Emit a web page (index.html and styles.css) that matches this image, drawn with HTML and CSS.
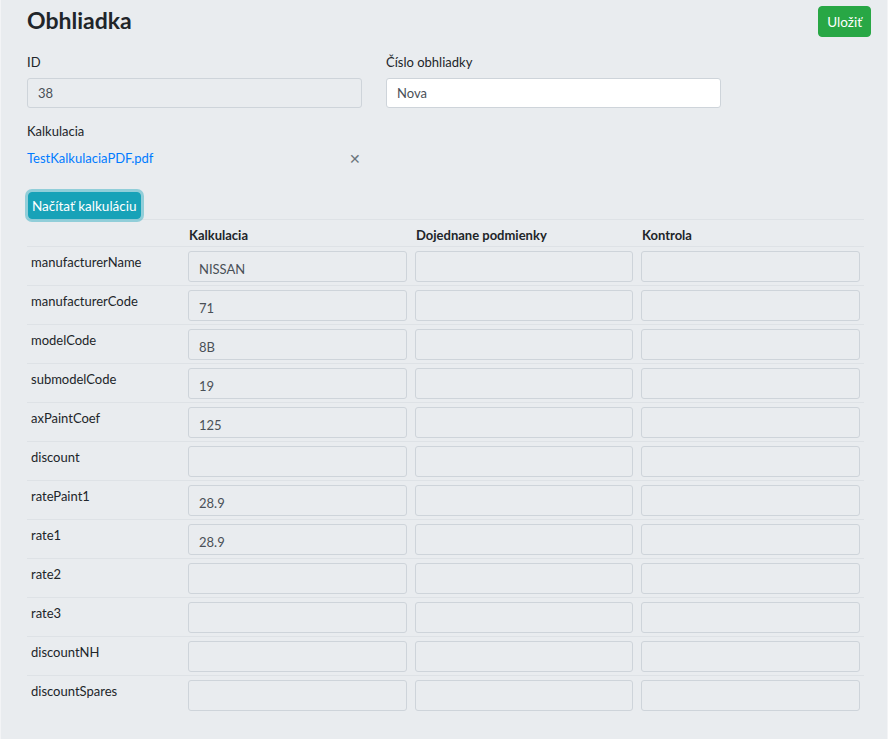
FILE: index.html
```html
<!DOCTYPE html>
<html lang="sk">
<head>
<meta charset="utf-8">
<title>Obhliadka</title>
<link rel="stylesheet" href="styles.css">
</head>
<body>
<div class="page">
  <header class="head">
    <h1 class="title">Obhliadka</h1>
    <button class="btn btn-success">Uložiť</button>
  </header>

  <div class="form-row">
    <div class="field">
      <label class="label">ID</label>
      <input class="input disabled" value="38" disabled>
    </div>
    <div class="field">
      <label class="label">Číslo obhliadky</label>
      <input class="input" value="Nova">
    </div>
  </div>

  <div class="field file-field">
    <label class="label">Kalkulacia</label>
    <div class="file-row">
      <a class="file-link" href="#">TestKalkulaciaPDF.pdf</a>
      <span class="remove">&#x2715;</span>
    </div>
  </div>

  <button class="btn btn-info">Načítať kalkuláciu</button>

  <div class="grid">
    <div class="hcell"></div>
    <div class="hcell">Kalkulacia</div>
    <div class="hcell">Dojednane podmienky</div>
    <div class="hcell">Kontrola</div>

    <div class="lcell">manufacturerName</div>
    <div class="icell"><input class="tinput" value="NISSAN" disabled></div>
    <div class="icell"><input class="tinput" disabled></div>
    <div class="icell"><input class="tinput" disabled></div>

    <div class="lcell">manufacturerCode</div>
    <div class="icell"><input class="tinput" value="71" disabled></div>
    <div class="icell"><input class="tinput" disabled></div>
    <div class="icell"><input class="tinput" disabled></div>

    <div class="lcell">modelCode</div>
    <div class="icell"><input class="tinput" value="8B" disabled></div>
    <div class="icell"><input class="tinput" disabled></div>
    <div class="icell"><input class="tinput" disabled></div>

    <div class="lcell">submodelCode</div>
    <div class="icell"><input class="tinput" value="19" disabled></div>
    <div class="icell"><input class="tinput" disabled></div>
    <div class="icell"><input class="tinput" disabled></div>

    <div class="lcell">axPaintCoef</div>
    <div class="icell"><input class="tinput" value="125" disabled></div>
    <div class="icell"><input class="tinput" disabled></div>
    <div class="icell"><input class="tinput" disabled></div>

    <div class="lcell">discount</div>
    <div class="icell"><input class="tinput" disabled></div>
    <div class="icell"><input class="tinput" disabled></div>
    <div class="icell"><input class="tinput" disabled></div>

    <div class="lcell">ratePaint1</div>
    <div class="icell"><input class="tinput" value="28.9" disabled></div>
    <div class="icell"><input class="tinput" disabled></div>
    <div class="icell"><input class="tinput" disabled></div>

    <div class="lcell">rate1</div>
    <div class="icell"><input class="tinput" value="28.9" disabled></div>
    <div class="icell"><input class="tinput" disabled></div>
    <div class="icell"><input class="tinput" disabled></div>

    <div class="lcell">rate2</div>
    <div class="icell"><input class="tinput" disabled></div>
    <div class="icell"><input class="tinput" disabled></div>
    <div class="icell"><input class="tinput" disabled></div>

    <div class="lcell">rate3</div>
    <div class="icell"><input class="tinput" disabled></div>
    <div class="icell"><input class="tinput" disabled></div>
    <div class="icell"><input class="tinput" disabled></div>

    <div class="lcell">discountNH</div>
    <div class="icell"><input class="tinput" disabled></div>
    <div class="icell"><input class="tinput" disabled></div>
    <div class="icell"><input class="tinput" disabled></div>

    <div class="lcell last">discountSpares</div>
    <div class="icell last"><input class="tinput" disabled></div>
    <div class="icell last"><input class="tinput" disabled></div>
    <div class="icell last"><input class="tinput" disabled></div>
  </div>
</div>
</body>
</html>
```

FILE: styles.css
```css
* { box-sizing: border-box; }

html, body {
  margin: 0;
  padding: 0;
  background: #e9ecef;
}

body {
  font-family: Lato, "Open Sans", sans-serif;
  font-size: 13px;
  color: #212529;
  min-height: 739px;
  border-left: 1px solid #f3f4f6;
  border-right: 1px solid #f3f4f6;
}

.page {
  padding: 6px 16px 24px 26px;
}

.head {
  display: flex;
  justify-content: space-between;
  align-items: flex-start;
}

.title {
  margin: 0;
  font-size: 23px;
  font-weight: 700;
  line-height: 28px;
  color: #212529;
}

.btn {
  font-family: inherit;
  font-size: 13.5px;
  color: #fff;
  border: 1px solid transparent;
  border-radius: 4px;
  cursor: pointer;
}

.btn-success {
  background: #28a745;
  border-color: #28a745;
  height: 31px;
  padding: 0 8px;
}

.btn-info {
  background: #17a2b8;
  border-color: #17a2b8;
  height: 27px;
  padding: 0 3px;
  margin: 23px 0 0 1px;
  box-shadow: 0 0 0 3px rgba(58, 176, 195, 0.5);
  display: block;
  position: relative;
  z-index: 1;
}

.form-row {
  display: flex;
  gap: 24px;
  margin-top: 15px;
}

.field {
  width: 335px;
  display: flex;
  flex-direction: column;
}

.label {
  line-height: 20px;
  margin-bottom: 6px;
}

.input {
  height: 30px;
  font-family: inherit;
  font-size: 13px;
  color: #495057;
  padding: 0 10px;
  border: 1px solid #ced4da;
  border-radius: 3px;
  background: #fff;
}

.input.disabled {
  background: #e9ecef;
}

.file-field {
  margin-top: 13px;
}

.file-field .label {
  margin-bottom: 5px;
}

.file-row {
  display: flex;
  justify-content: space-between;
  align-items: center;
  line-height: 20px;
}

.file-link {
  color: #007bff;
  text-decoration: none;
}

.remove {
  color: #6c757d;
  font-size: 14px;
  margin-right: 1px;
  margin-top: 3px;
}

.grid {
  display: grid;
  grid-template-columns: 157px 227px 226px 227px;
  border-top: 1px solid #dee2e6;
  width: 837px;
}

.hcell {
  font-weight: 700;
  line-height: 20px;
  padding: 5px 5px 1px;
  border-bottom: 1px solid #dee2e6;
}

.lcell {
  padding: 5px 4px 0;
  line-height: 20px;
  border-bottom: 1px solid #dee2e6;
  height: 39px;
}

.icell {
  padding: 4px 4px 0;
  border-bottom: 1px solid #dee2e6;
  height: 39px;
}

.last {
  border-bottom: none;
}

.tinput {
  width: 100%;
  height: 31px;
  font-family: inherit;
  font-size: 13px;
  color: #495057;
  padding: 4px 10px 0;
  border: 1px solid #ced4da;
  border-radius: 3px;
  background: #e9ecef;
}
```
